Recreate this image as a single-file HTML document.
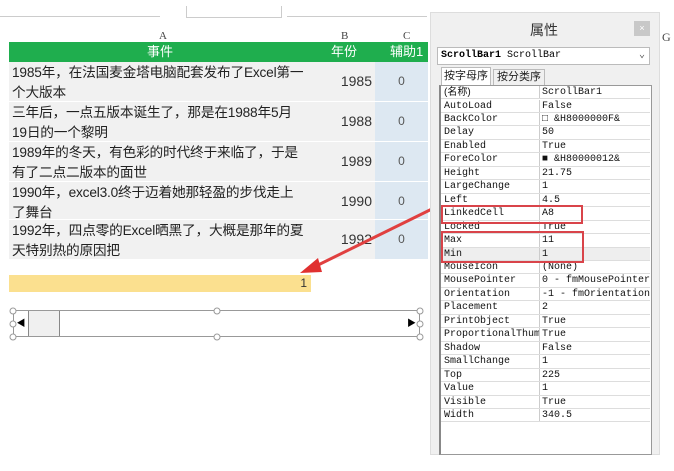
<!DOCTYPE html><html><head><meta charset="utf-8"><style>
*{margin:0;padding:0;box-sizing:border-box}
body{width:674px;height:471px;background:#fff;position:relative;overflow:hidden;font-family:"Liberation Sans","Noto Sans CJK SC",sans-serif}
.a{position:absolute}
.cj{font-family:"Liberation Sans","Noto Sans CJK SC",sans-serif;font-size:13px;color:#222}
.row{position:absolute;left:9px;width:419px;height:40px;background:#f1f1f1;border-bottom:1px solid #fff}
.row .t{position:absolute;left:3px;top:1px;width:300px;line-height:20px;font-size:13.7px;color:#222;white-space:nowrap;letter-spacing:-0.2px}
.row .y{position:absolute;left:296px;width:67px;text-align:right;top:11px;font-size:14px;color:#333}
.row .c{position:absolute;left:366px;width:53px;height:100%;background:#dde8f2;text-align:center;padding-top:12px;font-size:12px;color:#555}
.pg{position:absolute;left:441px;width:209px;height:13.46px;border-bottom:1px solid #ddd;font-family:"Liberation Mono",monospace;font-size:10px;line-height:13px;color:#111;background:#fff;white-space:nowrap;overflow:hidden}
.pg span{position:absolute;left:3px}
.pg b{font-weight:normal;position:absolute;left:98px;border-left:1px solid #ccc;padding-left:2px;height:13px;background:inherit}
</style></head><body>
<div class="a" style="left:0;top:16px;width:160px;border-bottom:1px solid #ccc"></div>
<div class="a" style="left:186px;top:6px;width:96px;height:12px;border:1px solid #ccc;border-top:none"></div>
<div class="a" style="left:287px;top:16px;width:140px;border-bottom:1px solid #ccc"></div>
<div class="a" style="left:9px;top:30px;width:420px;height:12px;font-family:'Liberation Serif',serif;font-size:11px;color:#444">
<span class="a" style="left:150px">A</span><span class="a" style="left:332px">B</span><span class="a" style="left:394px">C</span></div>
<div class="a" style="left:9px;top:42px;width:419px;height:20px;background:#1fae4e;color:#fff;font-size:13px;line-height:20px">
<span class="a" style="left:138px">事件</span><span class="a" style="left:322px">年份</span><span class="a" style="left:381px">辅助1</span></div>
<div class="row" style="top:62px"><div class="t">1985年，在法国麦金塔电脑配套发布了Excel第一<br>个大版本</div><div class="y">1985</div><div class="c">0</div></div>
<div class="row" style="top:102px"><div class="t">三年后，一点五版本诞生了，那是在1988年5月<br>19日的一个黎明</div><div class="y">1988</div><div class="c">0</div></div>
<div class="row" style="top:142px"><div class="t">1989年的冬天，有色彩的时代终于来临了，于是<br>有了二点二版本的面世</div><div class="y">1989</div><div class="c">0</div></div>
<div class="row" style="top:182px;height:38px"><div class="t">1990年，excel3.0终于迈着她那轻盈的步伐走上<br>了舞台</div><div class="y">1990</div><div class="c">0</div></div>
<div class="row" style="top:220px"><div class="t">1992年，四点零的Excel晒黑了，大概是那年的夏<br>天特别热的原因把</div><div class="y">1992</div><div class="c">0</div></div>
<div class="a" style="left:9px;top:275px;width:302px;height:17px;background:#fbe08f;text-align:right;padding-right:4px;font-size:12px;line-height:17px;color:#333">1</div>
<div class="a" style="left:13px;top:310px;width:407px;height:27px;border:1px solid #999;background:#fff">
<div class="a" style="left:0;top:0;width:15px;height:25px;border-right:1px solid #888;font-size:9px;line-height:25px;text-align:center">◀</div>
<div class="a" style="left:15px;top:0;width:31px;height:25px;border-right:1px solid #888;background:#f0f0f0"></div>
<div class="a" style="right:0;top:0;width:15px;height:25px;font-size:9px;line-height:25px;text-align:center">▶</div></div>
<svg class="a" style="left:0;top:0" width="674" height="471">
<g fill="#fff" stroke="#999" stroke-width="1">
<circle cx="13" cy="311" r="3"/><circle cx="217" cy="311" r="3"/><circle cx="420" cy="311" r="3"/>
<circle cx="13" cy="324" r="3"/><circle cx="420" cy="324" r="3"/>
<circle cx="13" cy="337" r="3"/><circle cx="217" cy="337" r="3"/><circle cx="420" cy="337" r="3"/></g>
<line x1="440" y1="205" x2="312" y2="268" stroke="#e04040" stroke-width="3"/>
<polygon points="300,273 318,258 322,272" fill="#e03030"/>
</svg>
<div class="a" style="left:430px;top:12px;width:230px;height:443px;background:#f0f0f0;border:1px solid #ddd"></div>
<div class="a cj" style="left:530px;top:20px;font-size:14px;color:#333">属性</div>
<div class="a" style="left:634px;top:21px;width:16px;height:15px;background:#c8c8c8;color:#fff;font-size:9px;text-align:center;line-height:15px">×</div>
<div class="a" style="left:662px;top:30px;font-family:'Liberation Serif',serif;font-size:12px;color:#444">G</div>
<div class="a" style="left:437px;top:47px;width:213px;height:18px;background:#fff;border:1px solid #bbb;font-family:'Liberation Mono',monospace;font-size:10px;line-height:16px;padding-left:3px"><b>ScrollBar1</b> ScrollBar<span class="a" style="right:4px;top:0;color:#555">⌄</span></div>
<div class="a cj" style="left:441px;top:67px;width:50px;height:18px;background:#fff;border:1px solid #bbb;border-bottom:none;font-size:11px;line-height:17px;text-align:center">按字母序</div>
<div class="a cj" style="left:493px;top:69px;width:52px;height:16px;border:1px solid #bbb;border-bottom:none;font-size:11px;line-height:15px;text-align:center">按分类序</div>
<div class="a" style="left:439px;top:85px;width:213px;height:370px;background:#fff;border:1px solid #999;border-left:2px solid #888"></div>
<div class="pg" style="top:86.0px"><span style="font-family:'Liberation Sans','Noto Sans CJK SC',sans-serif">(名称)</span><b>ScrollBar1</b></div>
<div class="pg" style="top:99.5px"><span>AutoLoad</span><b>False</b></div>
<div class="pg" style="top:112.9px"><span>BackColor</span><b>□ &amp;H8000000F&amp;</b></div>
<div class="pg" style="top:126.4px"><span>Delay</span><b>50</b></div>
<div class="pg" style="top:139.8px"><span>Enabled</span><b>True</b></div>
<div class="pg" style="top:153.3px"><span>ForeColor</span><b>■ &amp;H80000012&amp;</b></div>
<div class="pg" style="top:166.8px"><span>Height</span><b>21.75</b></div>
<div class="pg" style="top:180.2px"><span>LargeChange</span><b>1</b></div>
<div class="pg" style="top:193.7px"><span>Left</span><b>4.5</b></div>
<div class="pg" style="top:207.1px"><span>LinkedCell</span><b>A8</b></div>
<div class="pg" style="top:220.6px"><span>Locked</span><b>True</b></div>
<div class="pg" style="top:234.1px"><span>Max</span><b>11</b></div>
<div class="pg" style="top:247.5px;background:#eee"><span>Min</span><b>1</b></div>
<div class="pg" style="top:261.0px"><span>MouseIcon</span><b>(None)</b></div>
<div class="pg" style="top:274.4px"><span>MousePointer</span><b>0 - fmMousePointerDe</b></div>
<div class="pg" style="top:287.9px"><span>Orientation</span><b>-1 - fmOrientationAu</b></div>
<div class="pg" style="top:301.4px"><span>Placement</span><b>2</b></div>
<div class="pg" style="top:314.8px"><span>PrintObject</span><b>True</b></div>
<div class="pg" style="top:328.3px"><span>ProportionalThumb</span><b>True</b></div>
<div class="pg" style="top:341.7px"><span>Shadow</span><b>False</b></div>
<div class="pg" style="top:355.2px"><span>SmallChange</span><b>1</b></div>
<div class="pg" style="top:368.7px"><span>Top</span><b>225</b></div>
<div class="pg" style="top:382.1px"><span>Value</span><b>1</b></div>
<div class="pg" style="top:395.6px"><span>Visible</span><b>True</b></div>
<div class="pg" style="top:409.0px"><span>Width</span><b>340.5</b></div>
<div class="a" style="left:441px;top:205px;width:142px;height:19px;border:2px solid #d9444a"></div>
<div class="a" style="left:441px;top:231px;width:143px;height:32px;border:2px solid #d9444a"></div>
</body></html>
